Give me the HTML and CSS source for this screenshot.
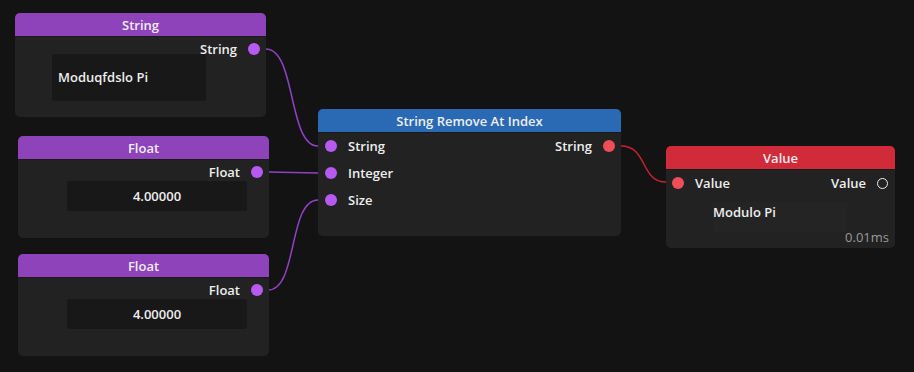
FILE: index.html
```html
<!DOCTYPE html>
<html lang="en">
<head>
  <meta charset="UTF-8">
  <title>Node Graph</title>
  <link rel="stylesheet" href="styles.css">
</head>
<body>

<div class="graph">
  <svg class="wires" width="914" height="372">
    <path class="wire" d="M266 49 C296 49, 288 146, 318 146" />
    <path class="wire" d="M268 172 L318 173" />
    <path class="wire" d="M268 290 C298 290, 288 200, 318 200" />
    <path class="wire red" d="M621 146 C648 146, 640 182, 666 182" />
  </svg>

  <div class="node node-string">
    <div class="node-header purple">String</div>
    <div class="node-body">
      <div class="port out"><span>String</span><i class="dot"></i></div>
      <div class="field text-field">Moduqfdslo Pi</div>
    </div>
  </div>

  <div class="node node-float1">
    <div class="node-header purple">Float</div>
    <div class="node-body">
      <div class="port out"><span>Float</span><i class="dot"></i></div>
      <div class="field num-field">4.00000</div>
    </div>
  </div>

  <div class="node node-float2">
    <div class="node-header purple">Float</div>
    <div class="node-body">
      <div class="port out"><span>Float</span><i class="dot"></i></div>
      <div class="field num-field">4.00000</div>
    </div>
  </div>

  <div class="node node-remove">
    <div class="node-header blue">String Remove At Index</div>
    <div class="node-body rows">
      <div class="row">
        <div class="port in"><i class="dot"></i><span>String</span></div>
        <div class="port out"><span>String</span><i class="dot red"></i></div>
      </div>
      <div class="row">
        <div class="port in"><i class="dot"></i><span>Integer</span></div>
      </div>
      <div class="row">
        <div class="port in"><i class="dot"></i><span>Size</span></div>
      </div>
    </div>
  </div>

  <div class="node node-value">
    <div class="node-header red">Value</div>
    <div class="node-body">
      <div class="row">
        <div class="port in"><i class="dot red"></i><span>Value</span></div>
        <div class="port out"><span>Value</span><i class="dot hollow"></i></div>
      </div>
      <div class="field value-field">Modulo Pi</div>
      <div class="timing">0.01ms</div>
    </div>
  </div>
</div>

</body>
</html>
```

FILE: styles.css
```css
html, body {
  margin: 0;
  background: #131313;
  overflow: hidden;
  font-family: 'Open Sans', 'Noto Sans', sans-serif;
  font-size: 13px;
  font-weight: 600;
  color: #eeeeee;
}
.graph {
  position: relative;
  width: 914px;
  height: 372px;
}
.wires {
  position: absolute;
  left: 0;
  top: 0;
}
.wire {
  fill: none;
  stroke: #9140c8;
  stroke-width: 1.5;
}
.wire.red {
  stroke: #c8222e;
}

/* nodes */
.node {
  position: absolute;
  background: #222222;
  border-radius: 5px;
  overflow: hidden;
  display: flex;
  flex-direction: column;
}
.node-header {
  height: 23px;
  line-height: 24px;
  text-align: center;
  border-bottom: 1px solid #1a1a1a;
}
.node-header.purple { background: #8e43ba; }
.node-header.blue { background: #2a69b3; }
.node-header.red { background: #d12a39; }
.node-body {
  position: relative;
  flex: 1;
  display: flex;
  flex-direction: column;
}

.node-string { left: 15px; top: 13px; width: 251px; height: 104px; }
.node-float1 { left: 18px; top: 136px; width: 251px; height: 102px; }
.node-float2 { left: 18px; top: 254px; width: 251px; height: 102px; }
.node-remove { left: 318px; top: 109px; width: 303px; height: 127px; }
.node-value { left: 666px; top: 146px; width: 229px; height: 102px; }

/* ports */
.row {
  height: 24px;
  display: flex;
  justify-content: space-between;
  align-items: center;
}
.rows {
  padding-top: 1px;
  gap: 3px;
}
.port {
  height: 24px;
  display: flex;
  align-items: center;
}
.port.out {
  margin-left: auto;
  padding-right: 6px;
}
.port.in {
  padding-left: 7px;
}
.port.out span { margin-right: 11px; }
.port.in span { margin-left: 11px; }
.dot {
  width: 12px;
  height: 12px;
  border-radius: 50%;
  background: #b65af2;
  display: block;
}
.dot.red { background: #f04d58; }
.dot.hollow {
  width: 9px;
  height: 9px;
  background: none;
  border: 1.5px solid #eeeeee;
}
.node-value .port.in { padding-left: 6px; }
.node-value .port.out { padding-right: 7px; }
.node-value .row { margin-top: 1px; }

/* fields */
.field {
  background: #181818;
  border-radius: 3px;
}
.text-field {
  margin: -7px 0 0 37px;
  width: 148px;
  height: 47px;
  line-height: 47px;
  padding-left: 6px;
}
.num-field {
  margin: -3px 0 0 49px;
  width: 180px;
  height: 30px;
  line-height: 30px;
  text-align: center;
}
.value-field {
  margin: 7px 0 0 47px;
  width: 134px;
  height: 30px;
  line-height: 20px;
  background: #242424;
  border-radius: 0;
}
.timing {
  position: absolute;
  right: 6px;
  bottom: 2px;
  color: #9a9a9a;
  font-weight: 400;
}
```
